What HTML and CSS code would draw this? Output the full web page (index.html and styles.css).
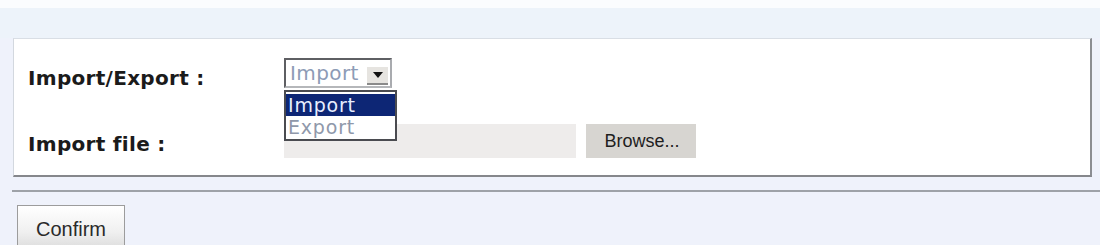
FILE: index.html
```html
<!DOCTYPE html>
<html>
<head>
<meta charset="utf-8">
<link rel="stylesheet" href="styles.css">
</head>
<body>
<div class="topbar"></div>
<div class="strip"></div>
<div class="panel">
  <div class="row row-select">
    <div class="label">Import/Export :</div>
    <div class="control">
      <div class="select">
        <span class="select-text">Import</span>
        <span class="arrow"><svg width="10" height="6" viewBox="0 0 10 6"><path d="M0 0H10L5 6Z" fill="#111"/></svg></span>
      </div>
      <div class="menu">
        <div class="opt opt-active">Import</div>
        <div class="opt">Export</div>
      </div>
    </div>
  </div>
  <div class="row row-file">
    <div class="label">Import file :</div>
    <div class="control file">
      <div class="file-field"></div>
      <div class="browse">Browse...</div>
    </div>
  </div>
</div>
<div class="sep"></div>
<div class="actions">
  <div class="btn">Confirm</div>
</div>
</body>
</html>
```

FILE: styles.css
```css
html, body {
  margin: 0;
  padding: 0;
}
body {
  width: 1100px;
  height: 245px;
  overflow: hidden;
  background: #eff2fb;
  font-family: "DejaVu Sans", Verdana, sans-serif;
}
.topbar {
  height: 8px;
  background: #fbfcfe;
}
.strip {
  height: 30px;
  background: #edf3fa;
}
.panel {
  margin: 0 8px 0 13px;
  background: #ffffff;
  border-style: solid;
  border-width: 1px 2px 2px 1px;
  border-color: #d9dee5 #8c8e92 #85878b #d3d8df;
  padding: 19px 0 0 14px;
  box-sizing: border-box;
  height: 139px;
}
.row {
  display: flex;
  align-items: center;
}
.row-select {
  height: 30px;
}
.row-file {
  height: 34px;
  margin-top: 36px;
}
.label {
  width: 256px;
  font-weight: bold;
  font-size: 20px;
  letter-spacing: 0.3px;
  color: #1b1b1b;
  flex: none;
}
.row-select .label {
  padding-top: 9px;
}
.row-file .label {
  padding-top: 5px;
}
.control {
  position: relative;
  height: 100%;
}
.select {
  width: 108px;
  height: 30px;
  box-sizing: border-box;
  border: 2px solid #5e5f63;
  border-right-color: #a9abaf;
  border-bottom-color: #b5b7ba;
  background: #fff;
  display: flex;
  align-items: center;
  position: relative;
}
.select-text {
  font-size: 20px;
  letter-spacing: 0.4px;
  color: #8d9bb6;
  padding-left: 4px;
  line-height: 1;
}
.arrow {
  position: absolute;
  right: 2px;
  top: 7px;
  width: 21px;
  height: 18px;
  background: #e6e4e0;
  border-bottom: 2px solid #8a8a8a;
  box-sizing: border-box;
  display: flex;
  align-items: center;
  justify-content: center;
}
.menu {
  position: absolute;
  left: 0;
  top: 32px;
  width: 113px;
  height: 51px;
  box-sizing: border-box;
  border: 2px solid #4a4b50;
  background: #fff;
  padding-top: 2px;
  z-index: 2;
}
.opt {
  height: 22px;
  font-size: 19px;
  letter-spacing: 0.8px;
  line-height: 22px;
  padding-left: 2px;
  color: #8f98aa;
}
.opt-active {
  background: #0d2675;
  color: #e8eeff;
}
.file {
  display: flex;
  gap: 10px;
}
.file-field {
  width: 292px;
  height: 34px;
  background: #eeeceb;
}
.browse {
  width: 110px;
  height: 34px;
  background: #d7d5d1;
  font-family: "Liberation Sans", Arial, sans-serif;
  font-size: 18px;
  color: #1e1e1e;
  display: flex;
  align-items: center;
  justify-content: center;
  padding-left: 2px;
  box-sizing: border-box;
}
.sep {
  margin: 13px 0 0 12px;
  height: 2px;
  background: #9ea2a8;
}
.actions {
  padding: 13px 0 0 17px;
}
.btn {
  width: 108px;
  height: 44px;
  box-sizing: border-box;
  border: 1px solid #9c9c9c;
  border-bottom: none;
  background: linear-gradient(#ffffff, #f0f0f0 60%, #dcdcdc);
  font-family: "Liberation Sans", Arial, sans-serif;
  font-size: 20px;
  color: #2a2a2a;
  display: flex;
  justify-content: center;
  padding-top: 12px;
}
```
